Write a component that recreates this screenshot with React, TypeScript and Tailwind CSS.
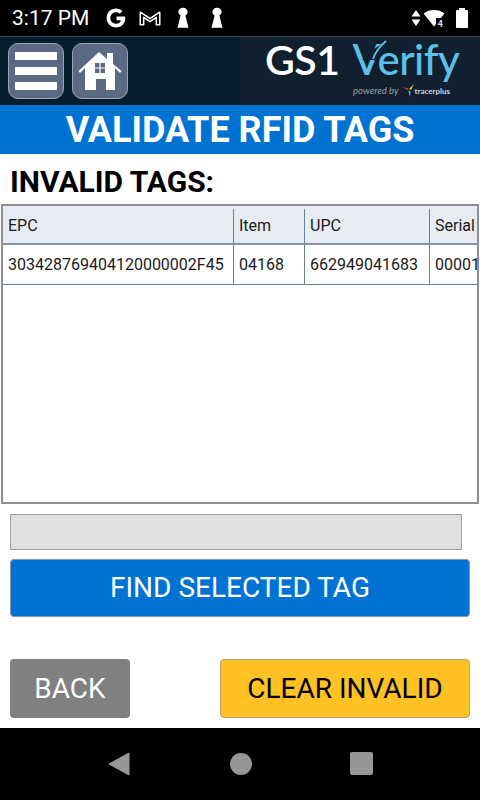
const App = () => {
  return (
    <div className="w-[480px] h-[800px] flex flex-col bg-white overflow-hidden font-['Roboto',sans-serif]">
      {/* Status bar */}
      <div className="h-[36px] bg-black flex items-center text-white shrink-0">
        <span className="ml-[12px] text-[21px] leading-none w-[84px] whitespace-nowrap">3:17 PM</span>
        <svg className="ml-[8px]" width="24" height="24" viewBox="0 0 22 22">
          <path d="M19.2 9.6H11.5V13H15.6C15 15.2 13.3 16.2 11 16.2 8 16.2 5.8 14 5.8 11S8 5.8 11 5.8C12.4 5.8 13.6 6.3 14.5 7.1L17 4.6C15.4 3.2 13.3 2.4 11 2.4 6.2 2.4 2.4 6.2 2.4 11S6.2 19.6 11 19.6C15.8 19.6 19.5 16.2 19.5 11.2 19.5 10.8 19.4 10.1 19.2 9.6Z" fill="white" />
        </svg>
        <svg className="ml-[8px]" width="28" height="23" viewBox="0 0 24 20">
          <path d="M3.5 15.5V4.5L12 10L20.5 4.5V15.5H17.5V9L12 12.8L6.5 9V15.5Z" fill="none" stroke="white" strokeWidth="1.3" strokeLinejoin="round" />
        </svg>
        <svg className="ml-[11px]" width="16" height="24" viewBox="0 0 14 22">
          <path d="M7 1.5C9.6 1.5 11.2 3.2 11.2 5.2 11.2 6.8 10.4 8 9.2 8.6L12 20H2L4.8 8.6C3.6 8 2.8 6.8 2.8 5.2 2.8 3.2 4.4 1.5 7 1.5Z" fill="white" />
        </svg>
        <svg className="ml-[18px]" width="16" height="24" viewBox="0 0 14 22">
          <path d="M7 1.5C9.6 1.5 11.2 3.2 11.2 5.2 11.2 6.8 10.4 8 9.2 8.6L12 20H2L4.8 8.6C3.6 8 2.8 6.8 2.8 5.2 2.8 3.2 4.4 1.5 7 1.5Z" fill="white" />
        </svg>
        <div className="ml-auto flex items-center mr-[12px]">
          <svg width="12" height="18" viewBox="0 0 12 18">
            <path d="M6 1L10.5 7.5H1.5ZM6 17L1.5 10.5H10.5Z" fill="white" />
          </svg>
          <svg className="ml-[1px]" width="24" height="20" viewBox="0 0 24 20">
            <path d="M0.5 5.5C3.5 3 7 2 11 2 15 2 18.5 3 21.5 5.5L11 18.5Z" fill="white" />
            <rect x="13" y="10" width="10" height="10" fill="black" />
            <text x="14.5" y="18.5" fontSize="9.5" fontWeight="700" fill="#d8d8d8" fontFamily="Roboto, sans-serif">4</text>
          </svg>
          <div className="ml-[9px] relative w-[12px] h-[18px] bg-white rounded-[1px] mt-[2px]">
            <div className="absolute top-[-2px] left-[3px] w-[6px] h-[2px] bg-white" />
          </div>
        </div>
      </div>

      {/* Header */}
      <div className="h-[69px] shrink-0 flex bg-[#061d2e] border-t border-[#3c4c5c]">
        <div className="w-[240px] flex items-start pt-[6px] pl-[8px] gap-[8px]">
          <button className="w-[56px] h-[56px] rounded-[10px] bg-[#5a6a82] border border-[#9aa5b4] flex flex-col items-center justify-center gap-[7px]">
            <span className="block w-[42px] h-[8px] bg-white" />
            <span className="block w-[42px] h-[8px] bg-white" />
            <span className="block w-[42px] h-[8px] bg-white" />
          </button>
          <button className="w-[56px] h-[56px] rounded-[10px] bg-[#5a6a82] border border-[#9aa5b4] flex items-center justify-center">
            <svg width="44" height="42" viewBox="0 0 44 42">
              <path d="M0.5 21L21 2L29 9V3H35V14L43.5 21L42 23L37 18V40H28V29H18V40H7V18L2 23Z" fill="white" />
              <path d="M17 13H27V23H17Z" fill="#5a6a82" />
              <path d="M22 13V23M17 18H27" stroke="white" strokeWidth="1.2" />
            </svg>
          </button>
        </div>
        <div className="flex-1 bg-[#10202f] relative font-['Lato',sans-serif]">
          <div className="flex items-baseline pl-[25px] pt-[1px] leading-none">
            <span className="text-white text-[41px] font-semibold tracking-[-0.5px]">GS1</span>
            <span className="ml-[13px] text-[#5cc0ea] text-[42px] font-medium tracking-[-0.5px]">Verify</span>
          </div>
          <svg className="absolute left-[122px] top-[3px]" width="28" height="20" viewBox="0 0 28 20">
            <path d="M0 20C6 14 13 7 25 1C20 7 16 13 13 20Z" fill="#10202f" />
            <path d="M11 19C13 13 17 7 24 1" fill="none" stroke="#5cc0ea" strokeWidth="1.8" />
          </svg>
          <div className="absolute left-[113px] top-[47px] flex items-center whitespace-nowrap">
            <span className="text-[9.5px] italic text-[#9aa3ab] leading-none">powered by</span>
            <svg className="ml-[3px]" width="13" height="13" viewBox="0 0 13 13">
              <path d="M0 3L6 4.5L6.5 6.5Z" fill="#e8452c" />
              <path d="M7 5L12 0L9 6Z" fill="#f5c518" />
              <path d="M6.5 7L8.5 7L8 13Z" fill="#5cc0ea" />
            </svg>
            <span className="text-[8px] font-bold text-[#d0d5da] leading-none">tracerplus</span>
          </div>
        </div>
      </div>

      {/* Title */}
      <div className="h-[49px] shrink-0 bg-[#0072d1] flex items-center justify-center">
        <h1 className="text-white text-[36px] font-bold leading-none">VALIDATE RFID TAGS</h1>
      </div>

      <div className="flex-1 flex flex-col">
        <h2 className="mt-[13px] ml-[10px] h-[37px] text-[30px] font-bold leading-[30px] text-black">INVALID TAGS:</h2>

        {/* Table */}
        <div className="mx-[1px] h-[300px] border-2 border-[#8f8f8f] overflow-hidden text-[16px] text-[#1a1a1a]">
          <div className="w-[500px] h-[39px] pt-[3px] grid grid-cols-[231px_71px_125px_1fr] bg-[#e7ecf4] border-b-2 border-[#8494a8]">
            <div className="px-[5px] flex items-center border-r border-[#6b7f96]">EPC</div>
            <div className="px-[5px] flex items-center border-r border-[#6b7f96]">Item</div>
            <div className="px-[5px] flex items-center border-r border-[#6b7f96]">UPC</div>
            <div className="px-[5px] flex items-center">Serial</div>
          </div>
          <div className="w-[500px] h-[40px] grid grid-cols-[231px_71px_125px_1fr] border-b border-[#6b7f96]">
            <div className="px-[5px] flex items-center border-r border-[#6b7f96]">303428769404120000002F45</div>
            <div className="px-[5px] flex items-center border-r border-[#6b7f96]">04168</div>
            <div className="px-[5px] flex items-center border-r border-[#6b7f96]">662949041683</div>
            <div className="px-[5px] flex items-center">00001</div>
          </div>
        </div>

        <div className="mt-[10px] mx-[10px] w-[452px] h-[36px] bg-[#dfdfdf] border border-[#a0a0a0]" />

        <button className="mt-[9px] mx-[10px] h-[58px] rounded-[4px] bg-[#0072d1] border border-[#7f9ab5] text-white text-[28px] leading-none">
          FIND SELECTED TAG
        </button>

        <div className="mt-[42px] mx-[10px] flex justify-between">
          <button className="w-[120px] h-[59px] rounded-[4px] bg-[#808080] text-white text-[28px] leading-none">BACK</button>
          <button className="w-[250px] h-[59px] rounded-[4px] bg-[#ffc124] border border-[#b8a060] text-black text-[28px] leading-none">
            CLEAR INVALID
          </button>
        </div>
      </div>

      {/* Nav bar */}
      <div className="h-[72px] shrink-0 bg-black flex items-center justify-center gap-[98px] pb-[1px]">
        <svg className="mr-[2px]" width="22" height="24" viewBox="0 0 22 24">
          <path d="M21 1V23L1 12Z" fill="#969696" stroke="#969696" strokeLinejoin="round" />
        </svg>
        <div className="w-[22px] h-[22px] rounded-full bg-[#969696]" />
        <div className="w-[23px] h-[23px] rounded-[2px] bg-[#969696]" />
      </div>
    </div>
  );
};

export default App;
